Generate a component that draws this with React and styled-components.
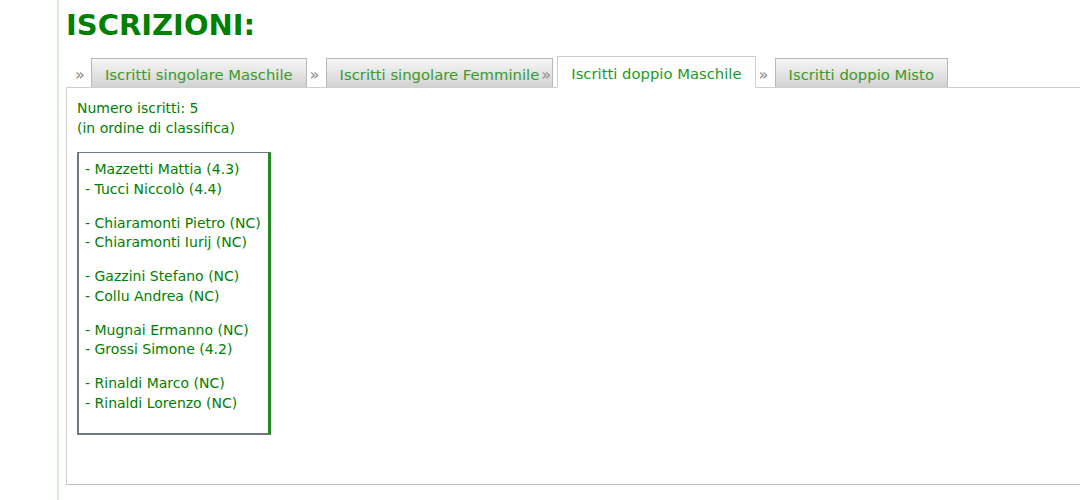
import React from 'react'
import styled, { createGlobalStyle } from 'styled-components'

const GlobalStyle = createGlobalStyle`
    html, body {
        margin: 0;
        padding: 0;
        background: #fff;
    }
    body {
        font-family: "DejaVu Sans", Verdana, sans-serif;
        font-size: 14px;
        color: #008000;
    }
`

const Page = styled.div`
    margin-left: 57px;
    border-left: 2px solid #d9eed9;
    min-height: 500px;
    padding: 7px 0 0 7px;
    box-sizing: border-box;
`

const Title = styled.h1`
    margin: 0 0 14px;
    font-size: 29px;
    line-height: 36px;
    font-weight: bold;
    color: #008000;
`

const TabBar = styled.div`
    display: flex;
    align-items: flex-end;
    height: 30px;
`

const TabItem = styled.div`
    display: flex;
    align-items: flex-end;
    margin-left: ${p => (p.$active ? '-12px' : '3px')};
    position: relative;
    z-index: ${p => (p.$active ? 2 : 1)};
    &:first-child {
        margin-left: 9px;
    }
`

const Sep = styled.span`
    color: #8a8a8a;
    font-size: 16px;
    line-height: 25px;
    width: 16px;
    box-sizing: border-box;
`

const Tab = styled.div`
    height: ${p => (p.$active ? '27px' : '25px')};
    line-height: ${p => (p.$active ? '27px' : '25px')};
    padding: 3px 13px 0;
    font-size: 14.8px;
    border: 1px solid ${p => (p.$active ? '#cfcfcf' : '#b8b8b8')};
    border-bottom: ${p => (p.$active ? '1px solid #fff' : 'none')};
    margin-bottom: ${p => (p.$active ? '-1px' : '0')};
    background: ${p => (p.$active ? '#fff' : 'linear-gradient(#f6f6f6, #d2d2d2)')};
    color: ${p => (p.$active ? '#1c9a1c' : '#3a9a2a')};
    white-space: nowrap;
`

const Panel = styled.div`
    border: 1px solid #cfcfcf;
    border-right: none;
    border-bottom-color: #bdbdbd;
    height: 398px;
    padding: 10px 10px;
    box-sizing: border-box;
`

const Info = styled.p`
    margin: 0 0 14px;
    line-height: 20px;
`

const List = styled.div`
    display: inline-block;
    border: 1px solid #6e7882;
    border-left-width: 2px;
    border-bottom-width: 2px;
    border-right: 3px solid #228b22;
    padding: 7px 6px 20px 6px;
    width: 177px;
    white-space: nowrap;
`

const Pair = styled.div`
    line-height: 19.5px;
    & + & {
        margin-top: 14.5px;
    }
`

const tabs = [
    'Iscritti singolare Maschile',
    'Iscritti singolare Femminile',
    'Iscritti doppio Maschile',
    'Iscritti doppio Misto',
]

const pairs = [
    ['Mazzetti Mattia (4.3)', 'Tucci Niccolò (4.4)'],
    ['Chiaramonti Pietro (NC)', 'Chiaramonti Iurij (NC)'],
    ['Gazzini Stefano (NC)', 'Collu Andrea (NC)'],
    ['Mugnai Ermanno (NC)', 'Grossi Simone (4.2)'],
    ['Rinaldi Marco (NC)', 'Rinaldi Lorenzo (NC)'],
]

const App = () => (
    <Page>
        <GlobalStyle />
        <Title>ISCRIZIONI:</Title>
        <TabBar>
            {tabs.map((t, i) => (
                <TabItem key={t} $active={i === 2}>
                    <Sep>»</Sep>
                    <Tab $active={i === 2}>{t}</Tab>
                </TabItem>
            ))}
        </TabBar>
        <Panel>
            <Info>
                Numero iscritti: 5<br />
                (in ordine di classifica)
            </Info>
            <List>
                {pairs.map(p => (
                    <Pair key={p[0]}>
                        - {p[0]}<br />
                        - {p[1]}
                    </Pair>
                ))}
            </List>
        </Panel>
    </Page>
)

export default App
